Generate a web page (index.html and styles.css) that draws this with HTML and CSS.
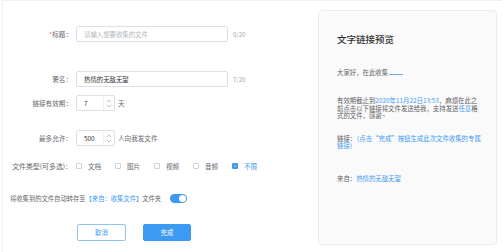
FILE: index.html
```html
<!DOCTYPE html>
<html lang="zh-CN">
<head>
    <meta charset="UTF-8">
    <meta name="viewport" content="width=device-width, initial-scale=1.0">
    <title>文件收集</title>
    <link rel="stylesheet" href="styles.css">
</head>
<body>
    <div class="page">
        <form class="collect-form">
            <div class="row">
                <label class="row-label"><span class="required">*</span>标题：</label>
                <input type="text" class="text-input" placeholder="请输入想要收集的文件">
                <span class="counter">0/20</span>
            </div>

            <div class="row row-name">
                <label class="row-label">署名：</label>
                <input type="text" class="text-input" value="热情的无敌无望">
                <span class="counter">7/20</span>
            </div>

            <div class="row row-days">
                <label class="row-label">链接有效期：</label>
                <div class="number-input">
                    <input type="text" value="7">
                    <span class="stepper">
                        <svg width="6" height="4" viewBox="0 0 6 4"><path d="M0.8 3.2 3 1 5.2 3.2" fill="none" stroke="#a8abb2" stroke-width="0.7"/></svg>
                        <svg width="6" height="4" viewBox="0 0 6 4"><path d="M0.8 0.8 3 3 5.2 0.8" fill="none" stroke="#a8abb2" stroke-width="0.7"/></svg>
                    </span>
                </div>
                <span class="unit">天</span>
            </div>

            <div class="row row-max">
                <label class="row-label">最多允许：</label>
                <div class="number-input">
                    <input type="text" value="500">
                    <span class="stepper">
                        <svg width="6" height="4" viewBox="0 0 6 4"><path d="M0.8 3.2 3 1 5.2 3.2" fill="none" stroke="#a8abb2" stroke-width="0.7"/></svg>
                        <svg width="6" height="4" viewBox="0 0 6 4"><path d="M0.8 0.8 3 3 5.2 0.8" fill="none" stroke="#a8abb2" stroke-width="0.7"/></svg>
                    </span>
                </div>
                <span class="unit">人向我发文件</span>
            </div>

            <div class="row row-types">
                <label class="row-label">文件类型(可多选)：</label>
                <span class="check"><span class="box"></span>文档</span>
                <span class="check"><span class="box"></span>图片</span>
                <span class="check"><span class="box"></span>视频</span>
                <span class="check"><span class="box"></span>音频</span>
                <span class="check checked">
                    <span class="box">
                        <svg width="6" height="6" viewBox="0 0 6 6"><path d="M1.3 3.1 2.5 4.3 4.8 1.7" fill="none" stroke="#fff" stroke-width="0.8"/></svg>
                    </span>不限
                </span>
            </div>

            <div class="row row-save">
                <span>将收集到的文件自动转存至<span class="blue">【来自：收集文件】</span>文件夹</span>
                <span class="switch"><span class="knob"></span></span>
            </div>

            <div class="row row-actions">
                <button type="button" class="btn btn-cancel">取消</button>
                <button type="submit" class="btn btn-done">完成</button>
            </div>
        </form>

        <div class="preview">
            <h2 class="preview-title">文字链接预览</h2>
            <p class="greet">大家好，在此收集<span class="blank"></span></p>
            <p class="deadline">有效期截止到<span class="blue">2020年11月22日13:53</span>，麻烦在此之前点击以下链接将文件发送给我，支持发送<span class="blue">任意</span>格式的文件，感谢~</p>
            <p class="link">链接：<span class="blue">（点击“完成”按钮生成此次文件收集的专属链接）</span></p>
            <p class="from">来自：<span class="blue">热情的无敌无望</span></p>
        </div>
    </div>
</body>
</html>
```

FILE: styles.css
```css
* {
    margin: 0;
    padding: 0;
    box-sizing: border-box;
    font-family: "Noto Sans CJK SC", "Noto Sans", sans-serif;
}

body {
    width: 502px;
    height: 252px;
    overflow: hidden;
    background-color: #ffffff;
}

.page {
    display: flex;
    height: 252px;
    margin-left: 2px;
    border-top: 1px solid #f0f0f0;
    border-left: 1px solid #f0f0f0;
}

.collect-form {
    width: 315px;
    padding-top: 25px;
}

.row {
    display: flex;
    align-items: center;
    height: 16px;
    font-size: 6.6px;
    color: #66686d;
}

.row-name {
    margin-top: 29px;
}

.row-days {
    margin-top: 8px;
}

.row-max {
    margin-top: 19px;
}

.row-types {
    margin-top: 15px;
    height: 10px;
}

.row-save {
    margin-top: 22px;
    height: 10px;
    padding-left: 7px;
    font-size: 6.3px;
}

.row-actions {
    margin-top: 21px;
    height: 17px;
    padding-left: 74px;
}

.row-label {
    width: 69px;
    margin-right: 4px;
    text-align: right;
    white-space: nowrap;
}

.row-types .row-label {
    font-size: 6.9px;
}

.required {
    color: #f56c6c;
}

.text-input {
    width: 152px;
    height: 16px;
    padding: 0 7px;
    border: 1px solid #dcdfe6;
    border-radius: 2px;
    font-size: 6.4px;
    color: #303133;
    outline: none;
}

.text-input::placeholder {
    color: #b4b7bd;
}

.counter {
    margin-left: 5px;
    font-size: 6px;
    color: #a0a3a8;
}

.number-input {
    display: flex;
    width: 39px;
    height: 16px;
    border: 1px solid #dcdfe6;
    border-radius: 2px;
}

.number-input input {
    width: 26px;
    padding-left: 7px;
    border: none;
    outline: none;
    font-size: 6.4px;
    color: #303133;
    background: none;
}

.stepper {
    display: flex;
    flex-direction: column;
    justify-content: center;
    align-items: center;
    gap: 1px;
    width: 11px;
    border-left: 1px solid #f0f1f3;
}

.stepper svg {
    display: block;
}

.unit {
    margin-left: 3px;
}

.check {
    display: flex;
    align-items: center;
    width: 39px;
}

.box {
    display: flex;
    align-items: center;
    justify-content: center;
    width: 6px;
    height: 6px;
    margin-right: 6px;
    border: 1px solid #cfd2d8;
    border-radius: 1px;
    background: #fff;
}

.checked {
    color: #3d9af2;
}

.checked .box {
    border-color: #3d9af2;
    background: #3d9af2;
}

.blue {
    color: #3d9af2;
}

.switch {
    position: relative;
    width: 17px;
    height: 9px;
    margin-left: 9px;
    border-radius: 9px;
    background: #3d9af2;
}

.knob {
    position: absolute;
    top: 1px;
    right: 1px;
    width: 7px;
    height: 7px;
    border-radius: 50%;
    background: #fff;
}

.btn {
    height: 17px;
    border-radius: 2px;
    font-size: 6.4px;
    cursor: pointer;
}

.btn-cancel {
    width: 49px;
    border: 1px solid #8fc3f5;
    background: #fff;
    color: #3d9af2;
}

.btn-done {
    width: 48px;
    margin-left: 17px;
    border: 1px solid #3d9af2;
    background: #3d9af2;
    color: #fff;
}

.preview {
    width: 179px;
    height: 235px;
    margin-top: 9px;
    padding: 22px 0 0 18px;
    border: 1px solid #ececec;
    border-radius: 4px;
    background: #fafafa;
    font-size: 6.4px;
    line-height: 7.4px;
    color: #5f6166;
}

.preview-title {
    font-size: 9.5px;
    line-height: 12px;
    font-weight: 500;
    color: #303133;
}

.preview p {
    width: 144px;
}

.greet {
    margin-top: 24px;
}

.blank {
    display: inline-block;
    width: 14px;
    height: 5px;
    margin-left: 1px;
    border-bottom: 1px solid #6fb3f2;
}

.deadline {
    margin-top: 21px;
}

.link {
    margin-top: 15px;
}

.from {
    margin-top: 26px;
}
```
